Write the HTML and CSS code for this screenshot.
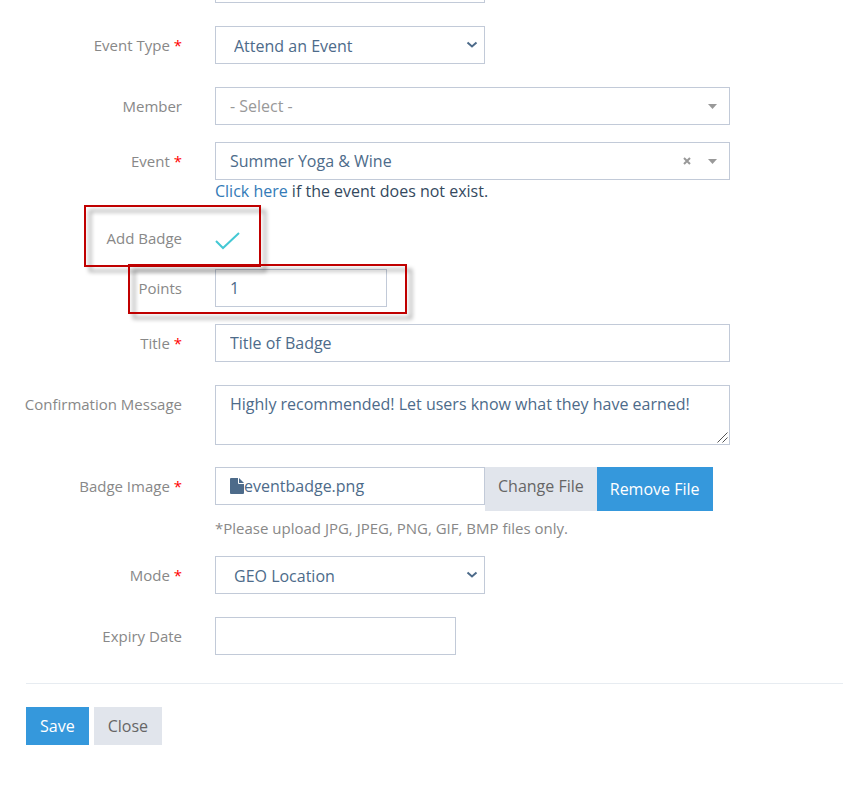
FILE: index.html
```html
<!DOCTYPE html>
<html lang="en">
<head>
<meta charset="utf-8">
<meta name="viewport" content="width=device-width, initial-scale=1">
<title>Edit Badge Event</title>
<link rel="stylesheet" href="styles.css">
</head>
<body>
<form class="badge-form">
  <div class="row row-top">
    <div class="field medium clipped"></div>
  </div>

  <div class="row">
    <label class="label" for="event-type">Event Type <span class="required">*</span></label>
    <div class="picker medium">
      <select class="control select" id="event-type"><option>Attend an Event</option></select>
      <svg class="chevron" viewBox="0 0 12 8" aria-hidden="true"><path d="M1.500 1.500 6 5.500l4.500-4"/></svg>
    </div>
  </div>

  <div class="row row-tight">
    <label class="label" for="member">Member</label>
    <div class="picker">
      <select class="control search placeholder" id="member"><option>- Select -</option></select>
      <svg class="caret" viewBox="0 0 9 5" aria-hidden="true"><path d="M0 0h9L4.500 5z"/></svg>
    </div>
  </div>

  <div class="row row-tight">
    <label class="label" for="event">Event <span class="required">*</span></label>
    <div>
      <div class="picker">
        <select class="control search" id="event"><option>Summer Yoga &amp; Wine</option></select>
        <button class="clear" type="button" aria-label="Clear event"><svg viewBox="0 0 8 8" aria-hidden="true"><path d="m1 1 6 6M7 1 1 7"/></svg></button>
        <svg class="caret" viewBox="0 0 9 5" aria-hidden="true"><path d="M0 0h9L4.500 5z"/></svg>
      </div>
      <p class="note"><a href="#">Click here</a> if the event does not exist.</p>
    </div>
  </div>

  <div class="row row-badge">
    <label class="label" for="add-badge">Add Badge</label>
    <div class="check">
      <input type="checkbox" id="add-badge" checked>
      <svg viewBox="0 0 26 20" aria-hidden="true"><path d="m1 10 7 7L24 2"/></svg>
    </div>
    <span class="callout callout-badge"></span>
  </div>

  <div class="row row-tight">
    <label class="label" for="points">Points</label>
    <input class="control points" id="points" type="text" value="1">
    <span class="callout callout-points"></span>
  </div>

  <div class="row">
    <label class="label" for="title">Title <span class="required">*</span></label>
    <input class="control" id="title" type="text" value="Title of Badge">
  </div>

  <div class="row row-message">
    <label class="label" for="message">Confirmation Message</label>
    <div class="picker">
      <textarea class="control message" id="message">Highly recommended! Let users know what they have earned!</textarea>
      <svg class="grip" viewBox="0 0 11 11" aria-hidden="true"><path d="M.5 10.500l10-10M5.500 10.500l5-5"/></svg>
    </div>
  </div>

  <div class="row row-tight">
    <label class="label" for="change-file">Badge Image <span class="required">*</span></label>
    <div>
      <div class="upload">
        <div class="control file">
          <svg viewBox="0 0 14 16" aria-hidden="true"><path d="M1 0h7v5q0 1 1 1h5v9q0 1-1 1H1q-1 0-1-1V1q0-1 1-1z"/><path d="M9 0l5 5H9z"/></svg><span>eventbadge.png</span>
        </div>
        <button class="button muted change" id="change-file" type="button">Change File</button>
        <button class="button primary" type="button">Remove File</button>
      </div>
      <p class="hint">*Please upload JPG, JPEG, PNG, GIF, BMP files only.</p>
    </div>
  </div>

  <div class="row">
    <label class="label" for="mode">Mode <span class="required">*</span></label>
    <div class="picker medium">
      <select class="control select" id="mode"><option>GEO Location</option></select>
      <svg class="chevron" viewBox="0 0 12 8" aria-hidden="true"><path d="M1.500 1.500 6 5.500l4.500-4"/></svg>
    </div>
  </div>

  <div class="row">
    <label class="label" for="expiry">Expiry Date</label>
    <input class="control date" id="expiry" type="text">
  </div>

  <div class="actions">
    <button class="button primary" type="submit">Save</button>
    <button class="button muted" type="button">Close</button>
  </div>
</form>
</body>
</html>
```

FILE: styles.css
```css
* {
  box-sizing: border-box;
}

body {
  margin: 0;
  background: #fff;
  color: #34495e;
  font: 16px/22px "Open Sans", sans-serif;
}

.row {
  position: relative;
  display: grid;
  grid-template-columns: 182px minmax(0, 515px);
  column-gap: 33px;
  align-items: start;
  margin-bottom: 23px;
}

.row-tight {
  margin-bottom: 17px;
}

.row-badge {
  margin: -1px 0 12px;
}

.row-message {
  margin-bottom: 22px;
}

.label {
  color: #888;
  font-size: 15px;
  line-height: 38px;
  text-align: right;
}

.required {
  color: #f00;
}

.control {
  display: block;
  width: 100%;
  height: 38px;
  margin: 0;
  padding: 0 14px;
  border: 1px solid #c2cad8;
  border-radius: 0;
  outline: 0;
  background: #fff;
  color: #4d6b8a;
  font: inherit;
}

.medium {
  width: 270px;
}

.clipped {
  grid-column: 2;
  height: 3px;
  border: 1px solid #c2cad8;
  border-top: 0;
}

.picker {
  position: relative;
}

.select,
.search {
  appearance: none;
}

.select {
  padding: 1px 18px 0;
}

.placeholder {
  color: #999;
}

.chevron {
  position: absolute;
  top: 15px;
  right: 7px;
  width: 12px;
  height: 8px;
  fill: none;
  stroke: #4d6b8a;
  stroke-width: 2;
  pointer-events: none;
}

.caret {
  position: absolute;
  top: 17px;
  right: 13px;
  width: 9px;
  height: 5px;
  fill: #999;
  pointer-events: none;
}

.clear {
  position: absolute;
  top: 15px;
  right: 39px;
  width: 8px;
  height: 8px;
  padding: 0;
  border: 0;
  background: none;
}

.clear svg {
  display: block;
  fill: none;
  stroke: #999;
  stroke-width: 2;
}

.note,
.hint {
  margin: 0;
}

.note {
  line-height: 23px;
}

.note a {
  color: #337ab7;
  text-decoration: none;
}

.hint {
  padding-top: 6px;
  color: #888;
  font-size: 15px;
}

.check {
  position: relative;
  width: 26px;
  height: 38px;
}

.check input {
  appearance: none;
  width: 26px;
  height: 38px;
  margin: 0;
}

.check svg {
  position: absolute;
  top: 12px;
  left: 0;
  width: 26px;
  height: 20px;
  fill: none;
  stroke: #44c8d4;
  stroke-width: 2;
  visibility: hidden;
  pointer-events: none;
}

.check input:checked + svg {
  visibility: visible;
}

.callout {
  position: absolute;
  z-index: 1;
  border: 2px solid #c00000;
  filter: drop-shadow(5px 5px 2px rgba(0, 0, 0, 0.4));
  pointer-events: none;
}

.callout-badge {
  top: -14px;
  left: 84px;
  width: 177px;
  height: 62px;
}

.callout-points {
  top: -5px;
  left: 128px;
  width: 279px;
  height: 50px;
}

.points {
  width: 172px;
}

.date {
  width: 241px;
}

.message {
  height: 60px;
  padding: 7px 14px;
  resize: none;
}

.grip {
  position: absolute;
  right: 2px;
  bottom: 2px;
  width: 11px;
  height: 11px;
  fill: none;
  stroke: #555;
  pointer-events: none;
}

.upload {
  display: flex;
  align-items: flex-start;
}

.file {
  display: flex;
  align-items: center;
  width: 270px;
}

.file svg {
  width: 14px;
  height: 16px;
  fill: #4d6b8a;
}

.button {
  padding: 8px 14px;
  border: 0;
  font: inherit;
  white-space: nowrap;
}

.upload .button {
  height: 44px;
  padding: 8px 13px;
}

.upload .change {
  padding: 8px 13px 14px;
}

.primary {
  background: #3598dc;
  color: #fff;
}

.muted {
  background: #e1e5ec;
  color: #666;
}

.actions {
  display: flex;
  gap: 5px;
  margin: 28px 0 0 26px;
  padding-top: 23px;
  border-top: 1px solid #e7ecf1;
}
```
